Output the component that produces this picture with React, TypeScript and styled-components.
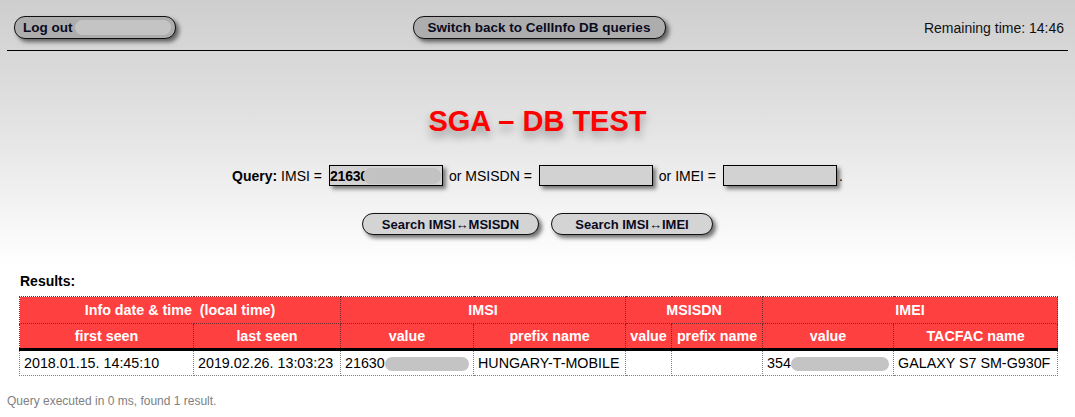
import styled, { createGlobalStyle } from 'styled-components';

const GlobalStyle = createGlobalStyle`
	html, body {
		margin: 0;
		padding: 0;
	}

	body {
		font-family: 'Liberation Sans', Arial, sans-serif;
		color: #000;
		background: linear-gradient(to bottom, #cecece 0px, #e4e4e4 130px, #fdfdfd 255px, #ffffff 270px);
		background-repeat: no-repeat;
		background-color: #fff;
		min-height: 417px;
	}
`;

const columns = [174, 147, 133, 152, 46, 91, 131, 164];

export default function App() {
	return (
		<>
			<GlobalStyle />
			<S.Page>
				<S.TopBar>
					<S.Left>
						<S.PillButton $width={162} $align='left'>
							Log out
							<S.Redacted $width={96} $height={15} $color='#c4c4c4' />
						</S.PillButton>
					</S.Left>
					<S.PillButton $width={253}>Switch back to CellInfo DB queries</S.PillButton>
					<S.Timer>Remaining time: 14:46</S.Timer>
				</S.TopBar>

				<S.Title>SGA – DB TEST</S.Title>

				<S.QueryRow>
					<b>Query:</b>&nbsp;IMSI =
					<S.Field>
						<S.FieldText>21630</S.FieldText>
						<S.Redacted $width={78} $height={16} $color='#c2c2c2' $overlap />
					</S.Field>
					or MSISDN =
					<S.Field />
					or IMEI =
					<S.Field $last />.
				</S.QueryRow>

				<S.SearchRow>
					<S.SearchButton $width={177}>Search IMSI↔MSISDN</S.SearchButton>
					<S.SearchButton $width={162}>Search IMSI↔IMEI</S.SearchButton>
				</S.SearchRow>

				<S.ResultsLabel>Results:</S.ResultsLabel>

				<S.Table>
					<colgroup>
						{columns.map((w, i) => (
							<S.Col key={i} $width={w} />
						))}
					</colgroup>
					<thead>
						<tr>
							<S.HeadCell colSpan={2} $top>Info date &amp; time&nbsp; (local time)</S.HeadCell>
							<S.HeadCell colSpan={2} $top>IMSI</S.HeadCell>
							<S.HeadCell colSpan={2} $top>MSISDN</S.HeadCell>
							<S.HeadCell colSpan={2} $top>IMEI</S.HeadCell>
						</tr>
						<tr>
							<S.HeadCell>first seen</S.HeadCell>
							<S.HeadCell>last seen</S.HeadCell>
							<S.HeadCell>value</S.HeadCell>
							<S.HeadCell>prefix name</S.HeadCell>
							<S.HeadCell>value</S.HeadCell>
							<S.HeadCell>prefix name</S.HeadCell>
							<S.HeadCell>value</S.HeadCell>
							<S.HeadCell>TACFAC name</S.HeadCell>
						</tr>
					</thead>
					<tbody>
						<tr>
							<S.Cell>2018.01.15. 14:45:10</S.Cell>
							<S.Cell>2019.02.26. 13:03:23</S.Cell>
							<S.Cell>
								21630
								<S.Redacted $width={84} $height={14} $color='#c4c4c4' />
							</S.Cell>
							<S.Cell>HUNGARY-T-MOBILE</S.Cell>
							<S.Cell />
							<S.Cell />
							<S.Cell>
								354
								<S.Redacted $width={98} $height={14} $color='#c4c4c4' />
							</S.Cell>
							<S.Cell>GALAXY S7 SM-G930F</S.Cell>
						</tr>
					</tbody>
				</S.Table>

				<S.Footer>Query executed in 0 ms, found 1 result.</S.Footer>
			</S.Page>
		</>
	);
}

namespace S {
	export const Page = styled.div`
		display: flex;
		flex-direction: column;
		width: 1075px;
	`;

	export const TopBar = styled.div`
		display: grid;
		grid-template-columns: 1fr auto 1fr;
		align-items: center;
		height: 51px;
		margin: 0 7px 0 7px;
		padding: 5px 4px 0 7px;
		box-sizing: border-box;
		border-bottom: 1px solid #000;
	`;

	export const Left = styled.div`
		display: flex;
	`;

	export const PillButton = styled.div<{ $width: number; $align?: 'left' }>`
		display: flex;
		align-items: center;
		justify-content: ${(p) => (p.$align === 'left' ? 'flex-start' : 'center')};
		gap: 3px;
		box-sizing: border-box;
		width: ${(p) => p.$width}px;
		height: 23px;
		padding: 0 ${(p) => (p.$align === 'left' ? '0 0 8px' : '0')};
		border: 1px solid #111;
		border-radius: 11px;
		background: #adadad;
		box-shadow: 3px 3px 4px rgba(0, 0, 0, 0.55);
		font-size: 13.5px;
		font-weight: bold;
		color: #0a0a1e;
		white-space: nowrap;
	`;

	export const Redacted = styled.span<{
		$width: number;
		$height: number;
		$color: string;
		$overlap?: boolean;
	}>`
		display: inline-block;
		flex: none;
		width: ${(p) => p.$width}px;
		height: ${(p) => p.$height}px;
		margin-left: ${(p) => (p.$overlap ? '-5px' : '0')};
		border-radius: ${(p) => p.$height / 2}px;
		background: ${(p) => p.$color};
		vertical-align: middle;
	`;

	export const Timer = styled.div`
		justify-self: end;
		font-size: 14px;
		color: #111;
	`;

	export const Title = styled.h1`
		margin: 53px 0 0 0;
		text-align: center;
		font-size: 29px;
		line-height: 34px;
		font-weight: bold;
		color: #ff0000;
		text-shadow: 0 6px 8px rgba(0, 0, 0, 0.35);
	`;

	export const QueryRow = styled.div`
		display: flex;
		align-items: center;
		justify-content: center;
		margin-top: 27px;
		height: 21px;
		padding-left: 0;
		font-size: 14px;
		white-space: nowrap;
	`;

	export const Field = styled.span<{ $last?: boolean }>`
		display: inline-flex;
		align-items: center;
		box-sizing: border-box;
		width: 114px;
		height: 21px;
		margin: 0 ${(p) => (p.$last ? '2px' : '6px')} 0 7px;
		border: 1px solid #000;
		background: #d2d2d2;
		box-shadow: 3px 3px 4px rgba(0, 0, 0, 0.5);
		overflow: hidden;
	`;

	export const FieldText = styled.span`
		font-size: 14px;
		font-weight: bold;
		letter-spacing: -0.2px;
	`;

	export const SearchRow = styled.div`
		display: flex;
		justify-content: center;
		gap: 12px;
		margin-top: 27px;
	`;

	export const SearchButton = styled.div<{ $width: number }>`
		display: flex;
		align-items: center;
		justify-content: center;
		box-sizing: border-box;
		width: ${(p) => p.$width}px;
		height: 22px;
		border: 1px solid #111;
		border-radius: 11px;
		background: #d4d4d4;
		box-shadow: 3px 3px 4px rgba(0, 0, 0, 0.55);
		font-size: 13px;
		font-weight: bold;
		color: #0a0a1e;
		white-space: nowrap;
	`;

	export const ResultsLabel = styled.div`
		margin: 38px 0 0 20px;
		font-size: 14px;
		line-height: 16px;
		font-weight: bold;
	`;

	export const Table = styled.table`
		margin: 7px 0 0 19px;
		width: 1038px;
		border-collapse: collapse;
		table-layout: fixed;
	`;

	export const Col = styled.col<{ $width: number }>`
		width: ${(p) => p.$width}px;
	`;

	export const HeadCell = styled.th<{ $top?: boolean }>`
		height: ${(p) => (p.$top ? 26 : 24)}px;
		padding: 0;
		background: #ff4040;
		color: #fff;
		font-size: 14.3px;
		font-weight: bold;
		text-align: center;
		white-space: pre;
		border: 1px dotted #7a2a2a;
		border-bottom: ${(p) => (p.$top ? '1px dotted #7a2a2a' : '3px solid #000')};
	`;

	export const Cell = styled.td`
		height: 24px;
		padding: 0 0 0 4px;
		font-size: 14.3px;
		white-space: nowrap;
		border: 1px dotted #808080;
		background: #fff;
	`;

	export const Footer = styled.div`
		margin: 18px 0 0 7px;
		font-size: 12px;
		line-height: 14px;
		color: #808080;
	`;
}
